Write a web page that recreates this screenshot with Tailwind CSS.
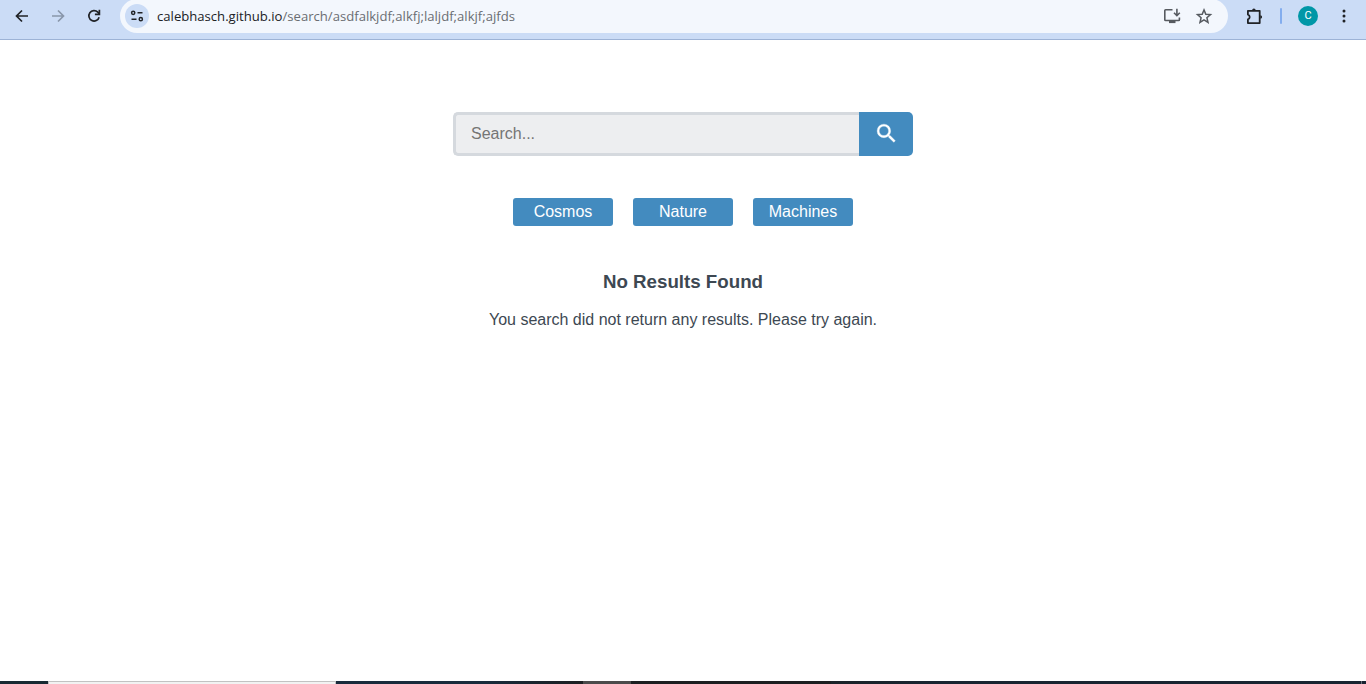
<!DOCTYPE html>
<html lang="en">
<head>
<meta charset="utf-8">
<title>Search</title>
<script src="https://cdn.jsdelivr.net/npm/@tailwindcss/browser@4"></script>
</head>
<body class="flex h-screen flex-col overflow-hidden bg-white font-['Liberation_Sans',Arial,sans-serif] text-[#3d4852]">
<header class="flex h-10 shrink-0 items-start border-b border-[#9db3d6] bg-[#cbdcf6] text-[#202226]">
  <nav class="flex h-8 items-center gap-5 pl-3.5">
    <svg class="size-4" viewBox="0 0 16 16" fill="none" stroke="currentColor" stroke-width="1.7"><path d="M14 8H3M8 2.5 2.5 8 8 13.5"/></svg>
    <svg class="size-4 text-[#8996aa]" viewBox="0 0 16 16" fill="none" stroke="currentColor" stroke-width="1.7"><path d="M2 8h11M8 2.5 13.5 8 8 13.5"/></svg>
    <svg class="size-4" viewBox="0 0 16 16" fill="none" stroke="currentColor" stroke-width="1.7"><path d="M13.1 9.2A5.2 5.2 0 1 1 11.8 4.2L13.4 5.8"/><path d="M13.4 1.8v4.6H8.9"/></svg>
  </nav>
  <div class="-mt-px ml-[18px] flex h-[34px] w-[1108px] items-center rounded-full bg-[#f3f7fd] pl-[5px] pr-[15px]">
    <span class="flex size-6 shrink-0 items-center justify-center rounded-full bg-[#cbdcf6]">
      <svg class="h-3 w-3.5" viewBox="0 0 14 12" fill="none" stroke="currentColor" stroke-width="1.5"><circle cx="3.200" cy="2.8" r="1.6"/><path d="M7.500 2.8h5M1.500 9.2h5"/><circle cx="10.800" cy="9.2" r="1.6"/></svg>
    </span>
    <svg class="ml-2 h-6 w-[366px] font-['Open_Sans','Noto_Sans',sans-serif] text-[13px]" viewBox="0 0 366 24"><text x="0" y="16.5" textLength="358" lengthAdjust="spacingAndGlyphs" fill="#202226">calebhasch.github.io<tspan fill="#6a6d72">/search/asdfalkjdf;alkfj;laljdf;alkjf;ajfds</tspan></text></svg>
    <div class="ml-auto flex gap-3.5 text-[#565a60]">
      <svg class="size-[18px]" viewBox="0 0 18 18" fill="none" stroke="currentColor" stroke-width="1.6"><path d="M9.500 2.800H2.600Q1.800 2.800 1.800 3.600v9.100q0 .8.800.8h13q.8 0 .8-.8v-2.200M13.900 1.800v6.500M11 5.800l2.900 2.900 2.900-2.900"/><path d="M6 15h6.500" stroke-width="2.200"/></svg>
      <svg class="size-[18px]" viewBox="0 0 18 18" fill="none" stroke="currentColor" stroke-width="1.500"><path d="m9 2.900 1.800 4.300 4.700.4-3.600 3.100 1.100 4.600L9 12.800l-4 2.500 1.100-4.600-3.600-3.100 4.700-.4z"/></svg>
    </div>
  </div>
  <div class="flex h-8 items-center">
    <svg class="ml-[17px] size-[19px]" viewBox="0 0 19 19" fill="none" stroke="currentColor" stroke-width="1.800"><path d="M2.900 3.800H14.700v12.300H2.900v-3.700a2.500 2.500 0 0 0 0-4.800z" stroke-linejoin="round"/><path d="M7.100 3.400a1.800 1.800 0 0 1 3.600 0zM15.300 8.200a1.800 1.800 0 0 1 0 3.600z" fill="currentColor" stroke="none"/></svg>
    <span class="ml-4 h-4 w-0.5 rounded-full bg-[#83adee]"></span>
    <span class="ml-4 flex size-5 items-center justify-center rounded-full bg-[#0097a7] font-[Roboto,sans-serif] text-[11px] text-white">C</span>
    <svg class="ml-[18px] size-4" viewBox="0 0 16 16" fill="currentColor"><circle cx="8" cy="3" r="1.500"/><circle cx="8" cy="8" r="1.500"/><circle cx="8" cy="13" r="1.500"/></svg>
  </div>
</header>
<main class="flex flex-1 flex-col items-center pt-[72px]">
  <form class="flex h-11 w-[460px]">
    <input class="h-11 w-[406px] rounded-l-[5px] border-[3px] border-r-0 border-[#d5d9de] bg-[#edeef0] px-[15px] text-base outline-none placeholder:text-[#757575]" placeholder="Search...">
    <button type="button" aria-label="Search" class="flex h-11 w-[54px] items-center justify-center rounded-r-[5px] bg-[#438bbf] pb-px text-white">
      <svg class="size-[25px]" viewBox="0 0 24 24" fill="currentColor" stroke="currentColor" stroke-width=".3"><path d="M15.500 14h-.79l-.28-.27A6.471 6.471 0 0 0 16 9.500 6.500 6.500 0 1 0 9.500 16c1.610 0 3.090-.59 4.230-1.570l.27.28v.79l5 4.990L20.490 19l-4.990-5zm-6 0C7.010 14 5 11.990 5 9.500S7.010 5 9.500 5 14 7.010 14 9.500 11.990 14 9.500 14z"/></svg>
    </button>
  </form>
  <nav class="mt-[42px] flex gap-5 text-base leading-7 text-white">
    <a class="h-7 w-[100px] rounded-[3px] bg-[#438bbf] text-center">Cosmos</a>
    <a class="h-7 w-[100px] rounded-[3px] bg-[#438bbf] text-center">Nature</a>
    <a class="h-7 w-[100px] rounded-[3px] bg-[#438bbf] text-center">Machines</a>
  </nav>
  <h3 class="mt-[45px] text-[18.720px] leading-[22px] font-bold">No Results Found</h3>
  <p class="mt-[17px] text-base leading-5">You search did not return any results. Please try again.</p>
</main>
<footer class="flex h-[3px] shrink-0 bg-[#182431]">
  <span class="w-12 bg-[#182a33]"></span>
  <span class="w-72 border-x border-t border-[#c2c2c2] bg-[#f2f2f2]"></span>
  <span class="w-[247px] bg-linear-to-r from-[#182b3c] via-[#182b3c] via-60% to-[#1c1f22]"></span>
  <span class="w-12 bg-[#4b4b4b]"></span>
  <span class="w-[200px] bg-[#1c1f21]"></span>
  <span class="flex-1 bg-linear-to-r from-[#1b2329] to-[#182431] to-20%"></span>
  <span class="mr-1 w-px bg-[#69737c]"></span>
</footer>
</body>
</html>
